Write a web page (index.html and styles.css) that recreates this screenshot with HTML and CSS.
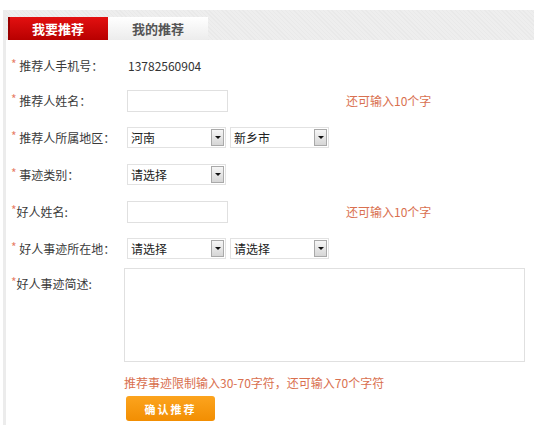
FILE: index.html
```html
<!DOCTYPE html>
<html lang="zh-CN">
<head>
  <meta charset="UTF-8" />
  <title>我要推荐</title>
  <link rel="stylesheet" href="styles.css">
</head>
<body>
  <div class="panel">
    <div class="tabs">
      <a class="tab active">我要推荐</a>
      <a class="tab">我的推荐</a>
    </div>

    <form class="form">
      <div class="row">
        <label class="lbl"><i>*</i> 推荐人手机号：</label>
        <span class="val">13782560904</span>
      </div>

      <div class="row">
        <label class="lbl"><i>*</i> 推荐人姓名：</label>
        <input class="txt" type="text">
        <span class="tip">还可输入10个字</span>
      </div>

      <div class="row">
        <label class="lbl"><i>*</i> 推荐人所属地区：</label>
        <span class="sel"><select><option>河南</option></select><b></b></span>
        <span class="sel"><select><option>新乡市</option></select><b></b></span>
      </div>

      <div class="row">
        <label class="lbl"><i>*</i> 事迹类别：</label>
        <span class="sel"><select><option>请选择</option></select><b></b></span>
      </div>

      <div class="row">
        <label class="lbl"><i>*</i>好人姓名:</label>
        <input class="txt" type="text">
        <span class="tip">还可输入10个字</span>
      </div>

      <div class="row">
        <label class="lbl"><i>*</i> 好人事迹所在地：</label>
        <span class="sel"><select><option>请选择</option></select><b></b></span>
        <span class="sel"><select><option>请选择</option></select><b></b></span>
      </div>

      <div class="row row-area">
        <label class="lbl"><i>*</i>好人事迹简述:</label>
        <textarea class="area"></textarea>
      </div>

      <div class="foot">
        <p class="tip">推荐事迹限制输入30-70字符，还可输入70个字符</p>
        <button type="button" class="btn">确认推荐</button>
      </div>
    </form>
  </div>
</body>
</html>
```

FILE: styles.css
```css
body {
  margin: 0;
  background: #fff;
  font-family: "Noto Sans CJK SC", "Noto Sans", sans-serif;
  font-size: 12px;
  color: #333;
  text-spacing-trim: space-all;
}

.panel {
  margin: 10px 0 0 3px;
  border-left: 3px solid #ececec;
  min-height: 415px;
}

.tabs {
  display: flex;
  height: 23px;
  padding: 7px 0 0 2px;
  background: #eeeeee repeating-linear-gradient(45deg, #eeeeee 0 2px, #e9e9e9 2px 3px);
}

.tab {
  width: 100px;
  height: 23px;
  line-height: 23px;
  text-align: center;
  font-size: 13px;
  font-weight: bold;
  color: #555;
  background: linear-gradient(#ffffff, #ececec);
  cursor: pointer;
}

.tab.active {
  color: #fff;
  background: linear-gradient(#e31010, #b80000);
  box-shadow: inset 2px 0 0 #9a0000;
}

.form {
  padding-top: 8px;
}

.row {
  display: flex;
  align-items: center;
  height: 37px;
}
.row:first-child {
  height: 34px;
}

.lbl {
  width: 116px;
  padding-left: 5px;
  flex-shrink: 0;
  color: #3a3a3a;
}
.lbl i {
  font-style: normal;
  color: #e8806a;
  position: relative;
  top: -2px;
}

.val {
  padding-left: 1px;
  font-size: 12px;
}

.txt {
  box-sizing: border-box;
  width: 101px;
  height: 22px;
  margin: 0;
  border: 1px solid #e0e0e0;
  font: inherit;
}

.tip {
  color: #d9704f;
  margin: 0 0 0 118px;
}

.sel {
  display: flex;
  align-items: center;
  box-sizing: border-box;
  width: 99px;
  height: 21px;
  margin-right: 4px;
  border: 1px solid #e2e2e2;
  background: #fff;
}
.sel select {
  flex: 1;
  min-width: 0;
  height: 19px;
  padding: 0 0 0 3px;
  border: none;
  background: transparent;
  appearance: none;
  -webkit-appearance: none;
  font: inherit;
  color: #222;
  outline: none;
}
.sel b {
  display: flex;
  align-items: center;
  justify-content: center;
  box-sizing: border-box;
  width: 13px;
  height: 17px;
  margin-right: 1px;
  border: 1px solid #a9a9a9;
  background: linear-gradient(#f6f6f6, #d6d6d6);
}
.sel b::after {
  content: "";
  border-left: 3px solid transparent;
  border-right: 3px solid transparent;
  border-top: 3px solid #111;
}

.row-area {
  height: auto;
  align-items: flex-start;
  padding-top: 1px;
}
.row-area .lbl {
  padding-top: 7px;
  width: 113px;
}
.area {
  box-sizing: border-box;
  width: 401px;
  height: 94px;
  margin: 0;
  border: 1px solid #e0e0e0;
  resize: none;
  font: inherit;
}

.foot {
  padding-left: 118px;
  padding-top: 11px;
}
.foot .tip {
  margin: 0;
  line-height: 20px;
}

.btn {
  margin-top: 3px;
  margin-left: 2px;
  width: 89px;
  height: 25px;
  border: none;
  border-radius: 3px;
  background: linear-gradient(#fca41e, #f28e02);
  color: #fff;
  font: bold 11px "Noto Sans CJK SC", sans-serif;
  letter-spacing: 2px;
  cursor: pointer;
}
```
